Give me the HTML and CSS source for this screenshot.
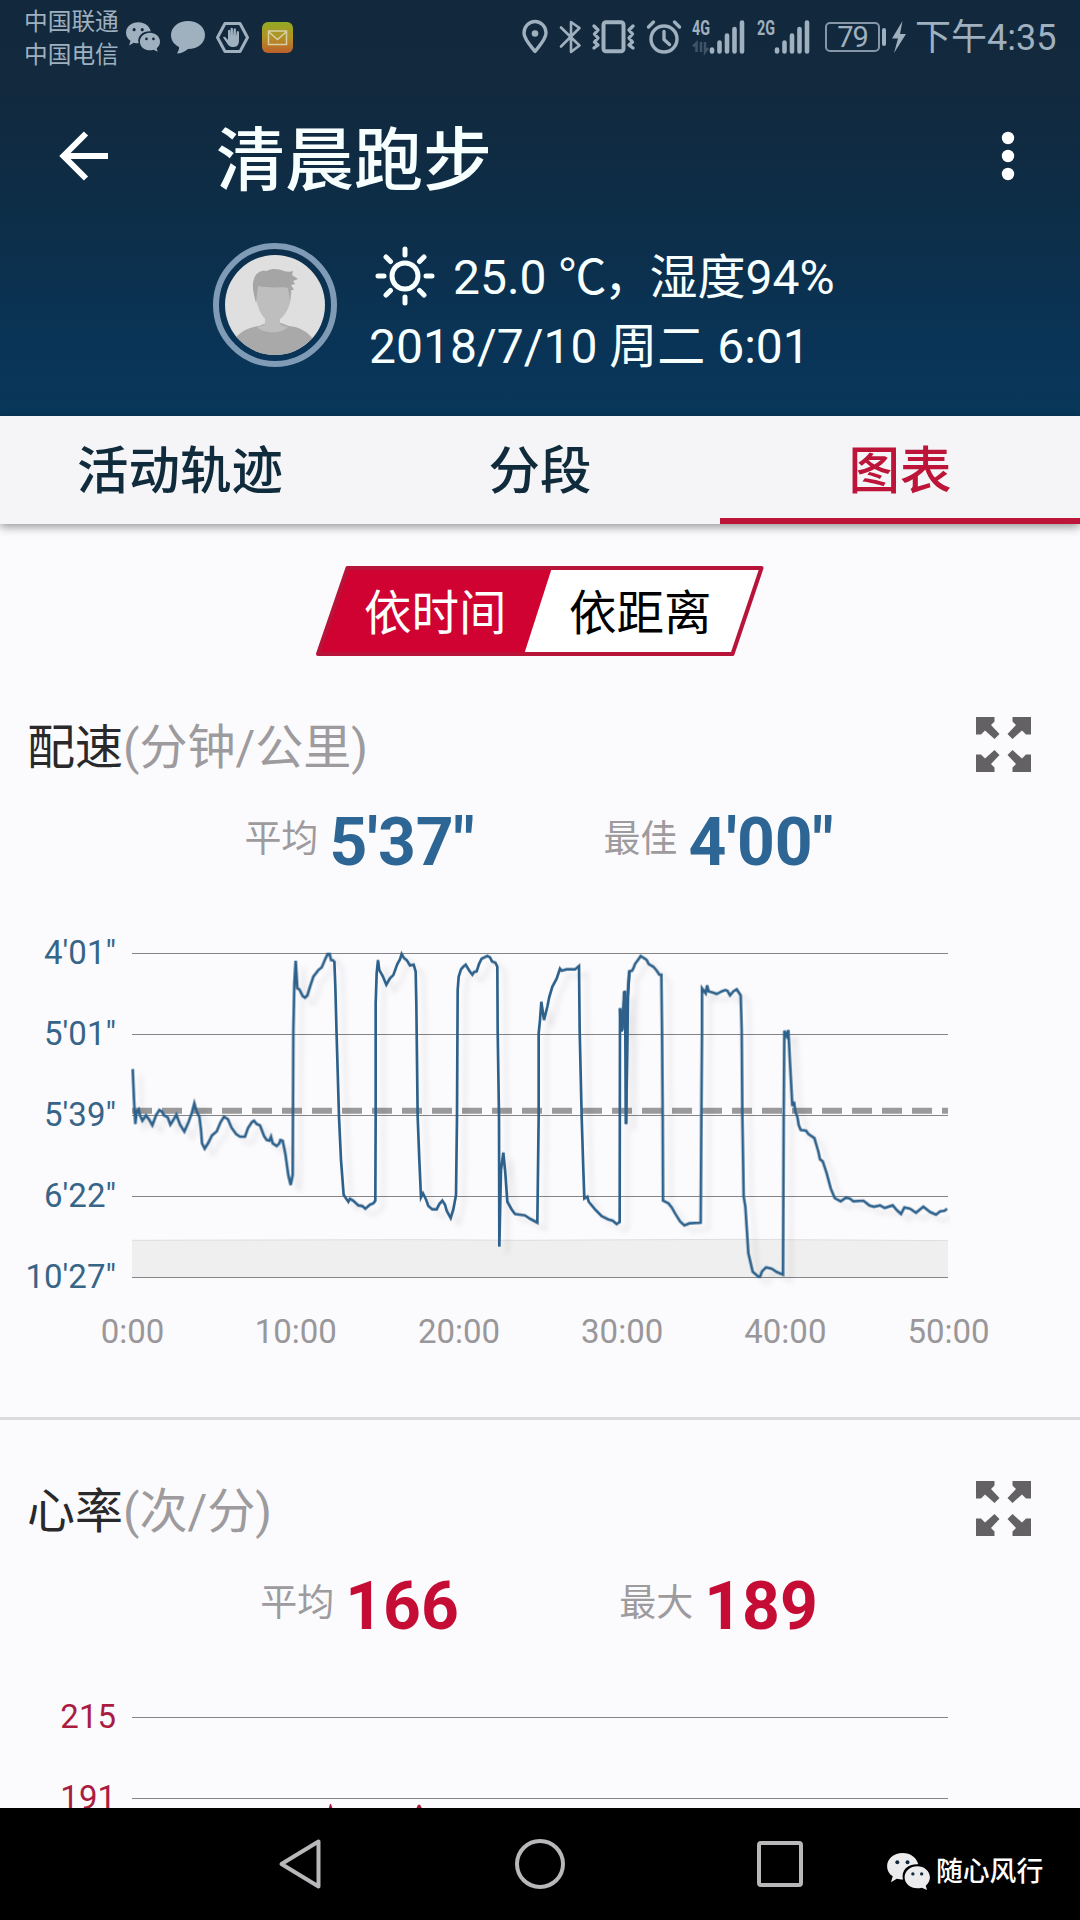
FILE: index.html
```html
<!DOCTYPE html>
<html lang="zh-CN">
<head>
<meta charset="utf-8">
<title>清晨跑步</title>
<link rel="stylesheet" href="styles.css">
</head>
<body>
<svg width="0" height="0" class="defs">
  <symbol id="wechat" viewBox="0 0 44 38">
    <path d="M16 0C7 0 0 6 0 13.500c0 4.300 2.200 8 5.800 10.500L4 30l6-3.600c2 .6 3.800.8 6.300.8C14 17 22 11 32 11.500 30.500 5 24 0 16 0z"/>
    <path d="M44 25c0-6.500-6-11.500-13-11.500S18 18.500 18 25s6 11.300 13 11.300c1.700 0 3.200-.2 4.700-.7L41 38l-1.300-4.300C42.300 31.600 44 28.500 44 25z"/>
    <g class="eye"><circle cx="10.500" cy="9.500" r="2"/><circle cx="21" cy="9.500" r="2"/><circle cx="26.500" cy="21.500" r="1.700"/><circle cx="35.500" cy="21.500" r="1.700"/></g>
  </symbol>
  <symbol id="expand" viewBox="0 0 55 55">
    <path d="M0 0H18.500V4.500L15 8l8.500 9-5 5L9 13.500 5 17.500H0zM55 0H36.500V4.500L40 8l-8.500 9 5 5L46 13.500l4 4h5zM0 55H18.500V50.500L15 47l8.500-9-5-5L9 41.500 5 37.500H0zM55 55H36.500V50.500L40 47l-8.500-9 5-5L46 41.500l4-4h5z"/>
  </symbol>
</svg>

<header class="header">
  <div class="status">
    <div class="carriers"><span>中国联通</span><span>中国电信</span></div>
    <svg class="st-wechat" width="34" height="30"><use href="#wechat"/></svg>
    <svg class="st-bubble" width="34" height="33" viewBox="0 0 34 33"><path d="M17 0C7.500 0 0 6.200 0 14c0 5.500 3 9.500 8 12 .5 2-.8 4-2 6.500 4 0 8-2 11-4.500C27 28 34 22 34 14S26.500 0 17 0z"/></svg>
    <svg class="st-hex" width="33" height="31" viewBox="0 0 33 31"><path class="line" d="M9 1.500h15l7.500 14L24 29.500H9l-7.500-14z"/><path d="M12 15V8.500q1.200-1.500 2.200 0V14l.4-7.500q1.200-1.500 2.300 0L17 14l.7-7q1.200-1.500 2.200 0V14.500l.9-5q1.200-1.200 2.200.2V18c0 4-1 7-5.500 7-4 0-5.500-2-7-4.500L7 15.500q1-1.500 2.500-.3L12 18z"/></svg>
    <svg class="st-mail" width="31" height="31" viewBox="0 0 31 31"><defs><linearGradient id="mg" x2="0" y2="1"><stop offset="0" stop-color="#91aa24"/><stop offset=".5" stop-color="#b39225"/><stop offset="1" stop-color="#bd5e2b"/></linearGradient></defs><rect width="31" height="31" rx="6" fill="url(#mg)"/><path d="M6.500 9h18v13.500h-18zM6.500 9.500l9 8 9-8" fill="none" stroke="#d8cfa4" stroke-width="1.500"/></svg>

    <svg class="st-pin" width="26" height="34" viewBox="0 0 26 34"><path class="line w3" d="M13 31.500C8 25 2 19 2 13a11 11.500 0 0 1 22 0c0 6-6 12-11 18.500z"/><circle cx="13" cy="13.500" r="3.300"/></svg>
    <svg class="st-bt" width="21" height="34" viewBox="0 0 21 34"><path class="line w25" d="M1 7.500l18.500 18L11 32V2l8.500 6L1 26.500"/></svg>
    <svg class="st-vib" width="43" height="34" viewBox="0 0 43 34"><rect class="line w35" x="11.500" y="2.200" width="20" height="29" rx="2.500"/><path class="line w3" d="M2 6l4 4-3.500 4L6 18l-3.500 4L6 25l-4 3M41 6l-4 4 3.500 4L37 18l3.500 4L37 25l4 3"/></svg>
    <svg class="st-alarm" width="34" height="34" viewBox="0 0 34 34"><circle class="line w3" cx="17" cy="19" r="13"/><path class="line w3" d="M17 11.500v8l5.500 5M1.500 7l5-5M32.500 7l-5-5"/></svg>
    <svg class="st-sig" width="53" height="34" viewBox="0 0 53 34"><text x="0" y="15" textLength="18" lengthAdjust="spacingAndGlyphs">4G</text><path class="dim" d="M4.500 32V23L1 26.500M9 22v10M13 22v10l3-4"/><path class="bars" d="M20 29.500v2M27.500 22.500v9M35 15.500v16M42.500 9v22.500M50 2.500v29"/></svg>
    <svg class="st-sig2" width="53" height="34" viewBox="0 0 53 34"><text x="0" y="15" textLength="18" lengthAdjust="spacingAndGlyphs">2G</text><path class="bars" d="M20 29.500v2M27.500 22.500v9M35 15.500v16M42.500 9v22.500M50 2.500v29"/></svg>
    <div class="battery">79</div><i class="nub"></i>
    <svg class="st-bolt" width="14" height="32" viewBox="0 0 14 32"><path d="M10.500 0L0 17.500h6L2 32l12-19H8z"/></svg>
    <time class="clock">下午4:35</time>
  </div>

  <div class="toolbar">
    <svg class="back" width="50" height="50" viewBox="0 0 50 50"><path d="M49 25H5M27 2.500L4.500 25 27 47.500"/></svg>
    <h1>清晨跑步</h1>
    <svg class="more" width="14" height="50" viewBox="0 0 14 50"><circle cx="7" cy="7" r="6.200"/><circle cx="7" cy="25" r="6.200"/><circle cx="7" cy="43" r="6.200"/></svg>
  </div>

  <div class="info">
    <svg class="avatar" width="124" height="124" viewBox="0 0 124 124">
      <defs><clipPath id="face"><circle cx="62" cy="62" r="50"/></clipPath></defs>
      <circle cx="62" cy="62" r="59" fill="none" stroke="#7f9bb5" stroke-width="6"/>
      <circle cx="62" cy="62" r="50" fill="#dfdfe0"/>
      <g clip-path="url(#face)">
        <path d="M20 98C27 88 36 84 46 83L53 80H68L76 83C86 84 94 88 100 96V116H20z" fill="#a9a9aa"/>
        <path d="M52 68h15v13c2 2 5 2 8 3-7 7-24 7-31 0 3-1 6-1 8-3z" fill="#bebebf"/>
        <path d="M42 42h36c1 9 0 16-2 21-3 9-10 16-16 16s-13-7-15-16c-2-5-4-12-3-21z" fill="#bebebf"/>
        <path d="M43 60C42 55 38 44 41 36c2-7 8-9 13-8 5-3 12-2 17 0 3 1 6 1 9 0l-1 4 6 4-5 2 2 3-4 1 3 5-3 0-1 10-2-12C70 43 60 46 45 43z" fill="#a5a5a6"/>
      </g>
    </svg>
    <div class="weather">
      <div class="row"><svg class="sun" width="60" height="60" viewBox="0 0 60 60"><circle cx="30" cy="30" r="13"/><path d="M30 3v6M30 51v6M3 30h6M51 30h6M11 11l4.500 4.500M44.500 44.500L49 49M11 49l4.500-4.500M44.500 15.500L49 11"/></svg><span>25.0 <span class="unit">℃，</span>湿度94%</span></div>
      <div class="row">2018/7/10 周二 6:01</div>
    </div>
  </div>
</header>

<nav class="tabs">
  <a class="tab">活动轨迹</a>
  <a class="tab">分段</a>
  <a class="tab active">图表</a>
</nav>

<main class="content">
  <div class="toggle">
    <svg class="toggle-shape" width="448" height="90" viewBox="0 0 448 90"><path d="M33 1.500H446L417 88.500H2z" fill="#fff"/><path d="M33 1.500H236L208 88.500H2z" fill="#d00232"/><path d="M31.500 2H445.500L416.500 88H2z" fill="none" stroke="#b81439" stroke-width="4" stroke-linejoin="round"/></svg>
    <span class="opt on">依时间</span><span class="opt">依距离</span>
  </div>

  <section class="card pace">
    <div class="card-head"><h2>配速<small>(分钟/公里)</small></h2><svg class="expand" width="55" height="55"><use href="#expand"/></svg></div>
    <div class="stats">
      <div class="stat"><label>平均</label><b>5'37"</b></div>
      <div class="stat"><label>最佳</label><b>4'00"</b></div>
    </div>
    <div class="chart">
      <div class="ylabels"><span>4'01"</span><span>5'01"</span><span>5'39"</span><span>6'22"</span><span>10'27"</span></div>
      <svg class="plot" width="820" height="350" viewBox="390 30 2460 1050">
        <path d="M396 931L1250 929 1560 931 2200 928 2844 932V1042H396z" fill="#efeff0"/>
        <path d="M396 931L1250 929 1560 931 2200 928 2844 932" fill="none" stroke="#dededf" stroke-width="3"/>
        <path class="grid" d="M396 70.500H2844M396 313.500H2844M396 556.500H2844M396 799.500H2844M396 1042.500H2844"/>
        <path d="M396 542H2844" stroke="#9a9a9b" stroke-width="18" stroke-dasharray="60 30"/>
        <g class="trace">
          <polyline points="398,417 402,510 406,582 410,545 416,538 420,556 427,572 438,556 448,570 457,586 468,556 478,540 486,545 492,556 503,562 511,584 520,570 529,554 540,584 553,605 566,575 575,550 583,520 590,545 598,560 603,600 606,640 614,656 625,638 636,616 650,604 662,576 672,560 684,568 694,592 708,612 720,620 735,620 744,594 756,576 762,572 770,582 780,586 792,618 800,630 808,632 813,620 818,640 830,648 838,640 841,630 848,632 856,672 865,736 872,765 878,735 880,300 883,160 887,92 892,175 898,178 908,198 915,203 922,196 930,170 940,140 955,120 965,112 977,84 983,72 989,72 993,90 1003,92"/>
          <polyline transform="translate(900 0)" points="103,92 106,170 110,320 117,560 123,690 131,795 145,815 150,806 160,812 175,826 187,828 196,836 210,824 220,820 226,812 227,560 227,220 230,130 234,90 238,120 248,138 259,164 270,145 280,135 292,102 300,88 305,72 312,84 320,90 330,106 341,104 347,125 349,220 353,560 358,690 363,802 369,790 378,808 385,828 397,838 410,838 418,822 427,812 435,824 440,842 452,864 460,838 468,795 471,560 473,180 476,140 483,118 490,110 497,104 508,122 517,134 522,126 530,124 537,102 545,86 562,78 570,82 576,94 586,98 592,110 593,300 597,560 598,950 603,720 610,668 616,730 622,815 635,838 645,852 675,856 690,866 712,878 716,560 716,310 720,270 724,215 732,270 742,230 748,200 757,170 770,146 780,116 785,122 800,118 825,118 837,108 839,300 845,560 850,720 853,805 862,800 866,815 885,838 905,858 925,868 938,872 950,882 959,876 960,235 965,305 975,182 978,582 984,200 988,124"/>
          <polyline transform="translate(1800 0)" points="60,235 68,300 72,184 78,300 78,582 82,200 88,124 96,122 100,115 105,102 115,88 122,78 135,86 140,90 146,102 160,110 170,122 178,134 184,134 186,300 188,560 189,812 205,820 215,832 225,850 240,874 253,886 268,880 302,878 304,560 306,300 306,175 317,190 321,166 326,184 340,188 350,192 365,184 376,180 382,182 390,196 400,184 410,178 422,196 425,300 427,560 431,800 436,830 445,970 458,1025 475,1040 480,1040 486,1024 498,1012 515,1016 530,1026 549,1034 551,560 553,302 560,318 565,300 570,400 577,528 582,515 586,545 592,560 596,585 602,600 618,602 625,612 643,624 655,665 660,688 668,694 680,730 692,775 704,804 722,814 738,803 750,806 760,814 790,812 808,826 822,830 840,826 854,834 878,826 890,840 903,852 913,832 930,836 948,848 970,830 990,846 1008,854 1020,844 1034,842 1041,836"/>
        </g>
      </svg>
    </div>
    <div class="xlabels"><span>0:00</span><span>10:00</span><span>20:00</span><span>30:00</span><span>40:00</span><span>50:00</span></div>
  </section>

  <section class="card heart">
    <div class="card-head"><h2>心率<small>(次/分)</small></h2><svg class="expand" width="55" height="55"><use href="#expand"/></svg></div>
    <div class="stats">
      <div class="stat"><label>平均</label><b>166</b></div>
      <div class="stat"><label>最大</label><b>189</b></div>
    </div>
    <div class="chart">
      <div class="ylabels"><span>215</span><span>191</span></div>
      <svg class="plot" width="820" height="350" viewBox="390 30 2460 1050">
        <path class="grid" d="M396 70.500H2844M396 313.500H2844"/>
        <path d="M984 350l6-20h3l7 20zM1246 350l8-18h6l10 18z" fill="#a51c3f"/>
      </svg>
    </div>
  </section>
</main>

<footer class="navbar">
  <svg class="nav-back" width="46" height="54" viewBox="0 0 46 54"><path d="M41.500 4.500v45L4.500 27z"/></svg>
  <svg class="nav-home" width="50" height="50" viewBox="0 0 50 50"><circle cx="25" cy="25" r="23"/></svg>
  <svg class="nav-recent" width="46" height="46" viewBox="0 0 46 46"><rect x="2" y="2" width="42" height="42" rx="2"/></svg>
  <div class="watermark"><svg width="43" height="37"><use href="#wechat"/></svg><span>随心风行</span></div>
</footer>
</body>
</html>
```
FILE: styles.css
```css
* { box-sizing: border-box; margin: 0; padding: 0; }
body {
  width: 1080px;
  height: 1920px;
  overflow: hidden;
  display: flex;
  flex-direction: column;
  background: #fbfafc;
  font-family: Roboto, "Noto Sans CJK SC", sans-serif;
}
svg { display: block; flex: none; }
.defs { position: absolute; }

.header {
  flex: none;
  height: 416px;
  background: linear-gradient(#12283d 0, #12293e 90px, #0d2d46 200px, #093559 370px, #083759 416px);
  color: #f8ffff;
}
.status {
  height: 74px;
  padding-left: 24px;
  display: flex;
  align-items: center;
  color: #9fb0bf;
  fill: #9fb0bf;
}
.status svg { overflow: visible; }
.status .line { fill: none; stroke: #9fb0bf; stroke-width: 3; stroke-linejoin: round; stroke-linecap: round; }
.status .line.w25 { stroke-width: 2.6; }
.status .line.w3 { stroke-width: 3.4; }
.status .line.w35 { stroke-width: 4; }
.carriers { width: 95px; display: flex; flex-direction: column; font-size: 23.700px; line-height: 33px; white-space: nowrap; padding-top: 4px; }
.eye { fill: #12283d; }
.st-wechat { margin-left: 7px; }
.st-bubble { margin-left: 11px; }
.st-hex { margin-left: 11px; }
.st-mail { margin-left: 13px; }
.st-pin { margin-left: 229px; }
.st-bt { margin-left: 12px; }
.st-vib { margin-left: 11px; }
.st-alarm { margin-left: 12px; }
.st-sig { margin-left: 11px; }
.st-sig2 { margin-left: 12px; }
.status text { font-size: 20px; line-height: 20px; font-weight: 700; }
.bars { stroke: #9fb0bf; stroke-width: 4.6; stroke-linecap: round; }
.dim { fill: none; stroke: #405469; stroke-width: 2.5; }
.battery { flex: none; width: 55px; height: 30px; margin-left: 15px; border: 2px solid #8496a8; border-radius: 5px; font-size: 29px; line-height: 27px; text-align: center; letter-spacing: -1px; }
.nub { flex: none; width: 4px; height: 18px; margin-left: 2px; border-radius: 2px; background: #9fb0bf; }
.st-bolt { margin-left: 6px; }
.clock { margin-left: 9px; padding-top: 2px; font-size: 36px; line-height: 40px; white-space: nowrap; }

.toolbar { height: 165px; display: flex; align-items: flex-start; padding: 57px 65px 0 59px; }
.back { fill: none; stroke: #fff; stroke-width: 6; }
.toolbar h1 { margin: -14px 0 0 107px; font-size: 69px; line-height: 90px; font-weight: 500; }
.more { margin-left: auto; fill: #fff; }

.info { display: flex; padding: 4px 0 0 213px; }
.weather { margin-left: 32px; padding-top: 2px; font-size: 48px; white-space: nowrap; }
.row { display: flex; height: 69px; line-height: 66px; align-items: flex-start; }
.sun { margin: 1px 18px 0 6px; fill: none; stroke: #f8ffff; stroke-width: 5; stroke-linecap: round; }
.unit { font-family: "Noto Sans CJK SC", sans-serif; line-height: 0; letter-spacing: -2.500px; }

.tabs {
  flex: none;
  position: relative;
  height: 108px;
  display: grid;
  grid-template-columns: repeat(3, 1fr);
  background: #f5f4f6;
  box-shadow: 0 3px 9px rgba(0,0,0,.4);
}
.tab { height: 108px; border-bottom: 6px solid transparent; text-align: center; font-size: 51.500px; line-height: 112px; font-weight: 500; color: #102b3c; }
.tab.active { color: #bd1539; border-color: #bd1539; }

.content { flex: 1; min-height: 0; overflow: hidden; padding-top: 42px; }
.toggle { position: relative; width: 448px; height: 90px; margin-left: 316px; display: flex; font-size: 47.500px; line-height: 96px; }
.toggle-shape { position: absolute; inset: 0; }
.opt { position: relative; width: 205px; padding-left: 48px; white-space: nowrap; color: #000; }
.opt.on { color: #fff; }

.card { height: 764px; }
.pace { border-bottom: 3px solid #dcdbdd; }
.card-head { display: flex; justify-content: space-between; padding: 61px 49px 0 27px; height: 129px; }
.card h2 { font-size: 48px; line-height: 62px; font-weight: 400; color: #29282a; }
.card small { font-size: 48px; font-weight: 400; color: #9d9b9e; }
.expand { fill: #636164; }
.stats { display: flex; height: 112px; padding-left: 180px; }
.stat { width: 359px; display: flex; justify-content: center; align-items: flex-start; }
.stat label { font-size: 37px; line-height: 110px; color: #9d9b9e; font-weight: 400; margin-right: 11px; }
.stat b { font-size: 66px; line-height: 115px; font-weight: 700; color: #2d6594; }
.chart { display: flex; height: 350px; margin-top: 43px; }
.ylabels { flex: none; width: 130px; padding-right: 14px; margin-top: -27px; text-align: right; font-size: 33px; color: #366588; }
.ylabels span { display: block; height: 81px; line-height: 79px; }
.xlabels { display: grid; grid-template-columns: repeat(6, 163.200px); width: 980px; margin: 22px 0 0 51px; text-align: center; font-size: 33px; line-height: 40px; color: #99979a; }
.grid { stroke: #858486; stroke-width: 3.500; fill: none; }
.trace { fill: none; stroke: #2d618b; stroke-width: 8; stroke-linejoin: miter; filter: drop-shadow(24px 20px 8px rgba(0,0,0,.08)); }
.heart .stat b { color: #c40c35; }
.heart .ylabels { color: #aa1d42; }

.navbar { position: relative; flex: none; height: 112px; background: #000; fill: none; stroke: #b8b7ba; stroke-width: 4; display: flex; align-items: center; padding-left: 277px; }
.nav-back { stroke-linejoin: round; }
.nav-home { margin-left: 192px; }
.nav-recent { margin-left: 192px; }
.watermark { display: flex; align-items: center; margin: 14px 0 0 84px; color: #fff; font-size: 26.800px; line-height: 38px; gap: 6px; white-space: nowrap; font-weight: 500; }
.watermark span { padding-top: 2px; }
.watermark svg { fill: #ececee; stroke: none; }
.watermark .eye { fill: #000; }
```
